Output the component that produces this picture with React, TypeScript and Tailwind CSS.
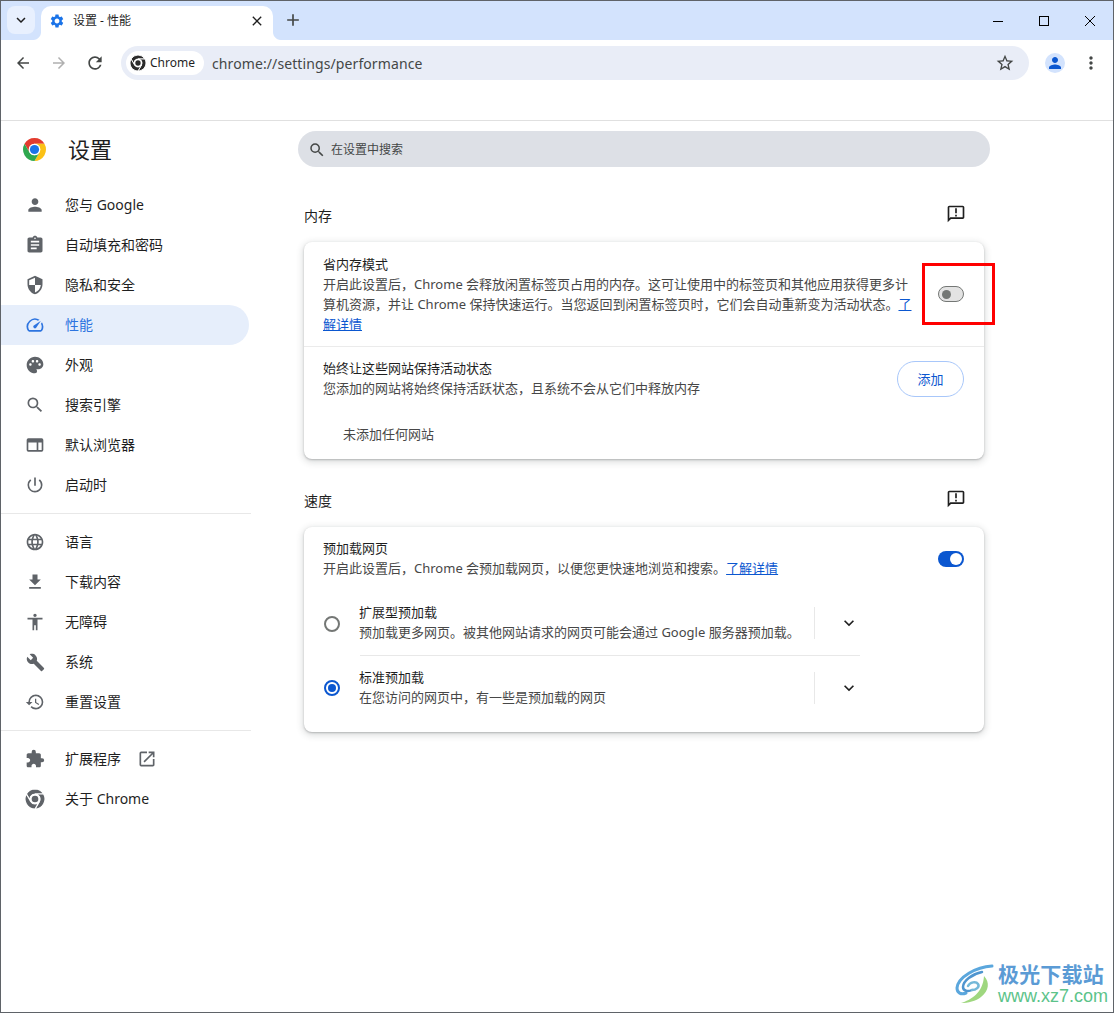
import React from 'react';
import {
  MdAccessibility, MdAdd, MdArrowBack, MdArrowForward, MdAssignment, MdBuild, MdClose, MdExtension,
  MdFileDownload, MdKeyboardArrowDown, MdLanguage, MdMoreVert, MdOpenInNew, MdOutlineAnnouncement,
  MdPalette, MdPerson, MdPowerSettingsNew, MdRefresh, MdRestore, MdSearch, MdSecurity, MdSettings,
  MdSpeed, MdStarBorder,
} from 'react-icons/md';

const ChromeMark: React.FC<{ size: number; mono?: string }> = ({ size, mono }) => {
  const gap = mono ? { stroke: '#fff', strokeWidth: 1.4 } : {};
  return (
    <svg width={size} height={size} viewBox="0 0 24 24">
      <path {...gap} fill={mono ?? '#e33b2e'} d="M12 0a12 12 0 0 1 10.39 6H12a6 6 0 0 0-5.2 9L1.61 6A12 12 0 0 1 12 0z" />
      <path {...gap} fill={mono ?? '#fbc116'} d="M22.39 6A12 12 0 0 1 12 24l5.2-9a6 6 0 0 0-5.2-9z" />
      <path {...gap} fill={mono ?? '#2fa84f'} d="M1.61 6l5.19 9a6 6 0 0 0 10.4 0L12 24A12 12 0 0 1 1.61 6z" />
      <circle cx="12" cy="12" r="6" fill="#fff" />
      <circle cx="12" cy="12" r={mono ? 4 : 4.8} fill={mono ?? '#1a73e8'} />
    </svg>
  );
};

const DefaultBrowserIcon = () => (
  <svg width="20" height="20" viewBox="0 0 24 24" fill="currentColor">
    <path d="M4 4h16a2 2 0 0 1 2 2v12a2 2 0 0 1-2 2H4a2 2 0 0 1-2-2V6a2 2 0 0 1 2-2zm0 5v9h10V9H4zm12 0v9h4V9h-4z" />
  </svg>
);

type NavItem = { label: string; icon: React.ReactNode; active?: boolean; extra?: boolean };

const groupA: NavItem[] = [
  { label: '您与 Google', icon: <MdPerson size={22} /> },
  { label: '自动填充和密码', icon: <MdAssignment size={20} /> },
  { label: '隐私和安全', icon: <MdSecurity size={20} /> },
  { label: '性能', icon: <MdSpeed size={20} />, active: true },
  { label: '外观', icon: <MdPalette size={20} /> },
  { label: '搜索引擎', icon: <MdSearch size={20} /> },
  { label: '默认浏览器', icon: <DefaultBrowserIcon /> },
  { label: '启动时', icon: <MdPowerSettingsNew size={20} /> },
];

const groupB: NavItem[] = [
  { label: '语言', icon: <MdLanguage size={20} /> },
  { label: '下载内容', icon: <MdFileDownload size={20} /> },
  { label: '无障碍', icon: <MdAccessibility size={20} /> },
  { label: '系统', icon: <MdBuild size={19} /> },
  { label: '重置设置', icon: <MdRestore size={20} /> },
];

const groupC: NavItem[] = [
  { label: '扩展程序', icon: <MdExtension size={20} />, extra: true },
  { label: '关于 Chrome', icon: <ChromeMark size={20} mono="#5f6368" /> },
];

const NavRow: React.FC<{ item: NavItem }> = ({ item }) => (
  <div
    className={`mr-[2px] flex h-10 items-center rounded-r-full pl-6 text-[14px] ${
      item.active ? 'bg-[#e6eefb] text-[#2d74e0]' : 'text-[#1f1f1f]'
    }`}
  >
    <span className={`flex w-5 justify-center ${item.active ? 'text-[#2d74e0]' : 'text-[#5f6368]'}`}>{item.icon}</span>
    <span className="ml-5 pb-[2px]">{item.label}</span>
    {item.extra && (
      <span className="ml-[16px] text-[#5f6368]">
        <MdOpenInNew size={20} />
      </span>
    )}
  </div>
);

const Toggle: React.FC<{ on?: boolean }> = ({ on }) =>
  on ? (
    <div className="flex h-4 w-[26px] shrink-0 items-center justify-end rounded-full bg-[#0b57d0] pr-[2px]">
      <div className="h-3 w-3 rounded-full bg-white" />
    </div>
  ) : (
    <div className="flex h-4 w-[26px] shrink-0 items-center rounded-full border border-[#747775] bg-[#e3e3e3] pl-[3px]">
      <div className="h-[9px] w-[9px] rounded-full bg-[#747775]" />
    </div>
  );

const SectionHeader: React.FC<{ title: string; className: string }> = ({ title, className }) => (
  <div className={`flex h-[52px] items-center justify-between pr-[18px] text-[14px] text-[#1f1f1f] ${className}`}>
    <span className="pb-[2px]">{title}</span>
    <span className="mb-[4px] text-[#1f1f1f]">
      <MdOutlineAnnouncement size={20} />
    </span>
  </div>
);

const PreloadOption: React.FC<{ title: string; desc: string; checked?: boolean; divided?: boolean }> = ({
  title,
  desc,
  checked,
  divided,
}) => (
  <div className={`flex items-center ${divided ? 'h-[65px]' : 'h-16'}`}>
    <div className="w-[37px] shrink-0 pl-px">
      {checked ? (
        <div className="flex h-4 w-4 items-center justify-center rounded-full border-2 border-[#0b57d0]">
          <div className="h-2 w-2 rounded-full bg-[#0b57d0]" />
        </div>
      ) : (
        <div className="h-4 w-4 rounded-full border-2 border-[#747775]" />
      )}
    </div>
    <div className={`flex h-full w-[500px] items-center ${divided ? 'border-b border-[#e8e8e8]' : ''}`}>
      <div className="ml-[-1px] flex-1 pb-[2px] text-[13px] leading-5">
        <div className="text-[#1f1f1f]">{title}</div>
        <div className="text-[#474747]">{desc}</div>
      </div>
      <div className="h-8 w-px bg-[#e8e8e8]" />
      <div className="w-[45px] pl-[24px] text-[#1f1f1f]">
        <MdKeyboardArrowDown size={20} />
      </div>
    </div>
  </div>
);

const Watermark = () => (
  <div className="absolute bottom-[6px] right-[5px] flex items-center gap-[2px] bg-white/70">
    <svg width="42" height="42" viewBox="0 0 42 42" fill="none">
      <path d="M38 3C22 4 4 14 3 25c0 5 4 7 9 5" stroke="#5ba7dd" strokeWidth="3" strokeLinecap="round" />
      <path d="M28 9C18 11 9 18 9 24c0 4 5 5 9 3" stroke="#4f95cf" strokeWidth="2.5" strokeLinecap="round" />
      <path d="M14 23c2-4 8-5 10-2s-2 6-6 6" stroke="#74b8d8" strokeWidth="2.5" strokeLinecap="round" />
      <path d="M30 13c6 6 5 15-3 21-5 4-13 6-20 6 10-3 22-10 23-27z" fill="#9fd77f" />
    </svg>
    <div className="flex flex-col items-start">
      <span className="text-[21px] font-bold leading-[24px] tracking-[0.2px] text-[#5b9bd5]">极光下载站</span>
      <span className="font-['Liberation_Sans',sans-serif] text-[18px] leading-[20px] text-[#5cc38a]">www.xz7.com</span>
    </div>
  </div>
);

export default function App() {
  return (
    <div className="relative flex h-[1013px] w-[1114px] flex-col overflow-hidden border border-[#5f6368] bg-white font-['Noto_Sans','Noto_Sans_CJK_SC',sans-serif]">
      {/* tab strip */}
      <div className="flex h-[39px] shrink-0 items-end bg-[#d3e3fd] text-[#1f1f1f]">
        <div className="mb-[6px] ml-[6px] flex h-7 w-7 items-center justify-center rounded-lg bg-[#e8f0fe]">
          <MdKeyboardArrowDown size={18} />
        </div>
        <div className="relative ml-[6px] flex h-[34px] w-[232px] items-center rounded-t-[10px] bg-white pb-[4px] pl-[8px] pr-[8px]">
          <div className="absolute bottom-0 left-[-8px] h-2 w-2 bg-[radial-gradient(circle_at_0_0,#d3e3fd_7.5px,#ffffff_8.5px)]" />
          <div className="absolute bottom-0 right-[-8px] h-2 w-2 bg-[radial-gradient(circle_at_100%_0,#d3e3fd_7.5px,#ffffff_8.5px)]" />
          <span className="text-[#1a73e8]">
            <MdSettings size={16} />
          </span>
          <span className="ml-[8px] flex-1 text-[12px]">设置 - 性能</span>
          <MdClose size={16} />
        </div>
        <div className="mb-[10px] ml-[10px] text-[#444746]">
          <MdAdd size={20} />
        </div>
        <div className="mb-[11px] ml-auto flex text-black">
          <svg width="46" height="16" viewBox="0 0 46 16" stroke="currentColor" fill="none">
            <path d="M18 8.5h10" />
          </svg>
          <svg width="46" height="16" viewBox="0 0 46 16" stroke="currentColor" fill="none">
            <rect x="18.5" y="3.5" width="9" height="9" />
          </svg>
          <svg width="46" height="16" viewBox="0 0 46 16" stroke="currentColor" fill="none">
            <path d="M18 3l10 10M28 3L18 13" />
          </svg>
        </div>
      </div>

      {/* toolbar */}
      <div className="flex h-[81px] shrink-0 items-start rounded-t-lg border-b border-[#e0e0e0] bg-white pt-[6px] text-[#444746]">
        <div className="flex h-[34px] items-center">
          <span className="ml-[13px]"><MdArrowBack size={18} /></span>
          <span className="ml-[18px] text-[#b0b0b0]"><MdArrowForward size={18} /></span>
          <span className="ml-[17px]"><MdRefresh size={20} /></span>
        </div>
        <div className="ml-[16px] flex h-[34px] w-[908px] items-center rounded-full bg-[#e9edf7] pl-[5px] pr-[14px]">
          <div className="flex h-6 w-[78px] items-center rounded-full bg-white pl-[4px] text-[12px] text-[#1f1f1f]">
            <ChromeMark size={16} mono="#2b2b2b" />
            <span className="ml-[4px]">Chrome</span>
          </div>
          <span className="ml-2 flex-1 text-[14px] tracking-[0.1px] text-[#444746]">chrome://settings/performance</span>
          <MdStarBorder size={20} />
        </div>
        <div className="ml-4 flex h-[34px] items-center">
          <div className="flex h-5 w-5 items-center justify-center rounded-full bg-[#d3e3fd] text-[#0b57d0]">
            <MdPerson size={18} />
          </div>
          <span className="ml-[16px]"><MdMoreVert size={20} /></span>
        </div>
      </div>

      {/* page */}
      <div className="flex flex-1">
        <aside className="w-[250px] shrink-0">
          <div className="flex h-[64px] items-center pb-[8px] pl-[22px]">
            <ChromeMark size={23} />
            <span className="ml-[22px] text-[22px] text-[#1f1f1f]">设置</span>
          </div>
          {groupA.map((item) => (
            <NavRow key={item.label} item={item} />
          ))}
          <div className="my-2 h-px bg-[#e8e8e8]" />
          {groupB.map((item) => (
            <NavRow key={item.label} item={item} />
          ))}
          <div className="my-2 h-px bg-[#e8e8e8]" />
          {groupC.map((item) => (
            <NavRow key={item.label} item={item} />
          ))}
        </aside>

        <main className="pl-[53px] pt-[10px]">
          <div className="ml-[-6px] flex h-9 w-[692px] items-center rounded-full bg-[#dde0e6] pl-[10px] pt-[2px] text-[12px] text-[#444746]">
            <MdSearch size={18} />
            <span className="ml-[5px]">在设置中搜索</span>
          </div>

          <SectionHeader title="内存" className="mt-[23px] w-[680px]" />
          <section className="w-[680px] rounded-lg bg-white shadow-[0_1px_2px_rgba(60,64,67,0.3),0_2px_6px_2px_rgba(60,64,67,0.15)]">
            <div className="flex items-center border-b border-[#ebebeb] py-3 pl-[19px] pr-5">
              <div className="w-[592px] text-[13px] leading-5">
                <div className="text-[#1f1f1f]">省内存模式</div>
                <div className="text-[#474747]">
                  开启此设置后，Chrome 会释放闲置标签页占用的内存。这可让使用中的标签页和其他应用获得更多计算机资源，并让 Chrome 保持快速运行。当您返回到闲置标签页时，它们会自动重新变为活动状态。
                  <span className="text-[#0b57d0] underline">了解详情</span>
                </div>
              </div>
              <div className="ml-auto">
                <Toggle />
              </div>
            </div>
            <div className="flex items-center py-[11px] pl-[19px] pr-5 text-[13px] leading-5">
              <div className="flex-1 pb-[2px]">
                <div className="text-[#1f1f1f]">始终让这些网站保持活动状态</div>
                <div className="text-[#474747]">您添加的网站将始终保持活跃状态，且系统不会从它们中释放内存</div>
              </div>
              <div className="flex h-9 w-[67px] items-center justify-center rounded-full border border-[#a8c7fa] text-[#0b57d0]">添加</div>
            </div>
            <div className="flex h-12 items-center pl-[39px] text-[13px] text-[#474747]">未添加任何网站</div>
          </section>

          <SectionHeader title="速度" className="mt-[16px] w-[680px]" />
          <section className="w-[680px] rounded-lg bg-white pb-3 pl-[19px] pr-5 pt-[11px] shadow-[0_1px_2px_rgba(60,64,67,0.3),0_2px_6px_2px_rgba(60,64,67,0.15)]">
            <div className="flex items-start text-[13px] leading-5">
              <div className="flex-1">
                <div className="text-[#1f1f1f]">预加载网页</div>
                <div className="text-[#474747]">
                  开启此设置后，Chrome 会预加载网页，以便您更快速地浏览和搜索。
                  <span className="text-[#0b57d0] underline">了解详情</span>
                </div>
              </div>
              <div className="mt-[13px]">
                <Toggle on />
              </div>
            </div>
            <div className="mt-[13px]">
              <PreloadOption title="扩展型预加载" desc="预加载更多网页。被其他网站请求的网页可能会通过 Google 服务器预加载。" divided />
              <PreloadOption title="标准预加载" desc="在您访问的网页中，有一些是预加载的网页" checked />
            </div>
          </section>
        </main>
      </div>

      {/* red highlight over the switch */}
      <div className="absolute left-[921px] top-[262px] h-[62px] w-[73px] border-[3px] border-[#ff0000]" />
      <Watermark />
    </div>
  );
}
